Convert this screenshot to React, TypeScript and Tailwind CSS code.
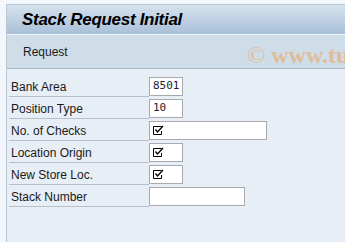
const rows = [
  { label: "Bank Area", value: "8501", width: "w-[34px]" },
  { label: "Position Type", value: "10", width: "w-[34px]" },
  { label: "No. of Checks", check: true, width: "w-[118px]" },
  { label: "Location Origin", check: true, width: "w-[34px]" },
  { label: "New Store Loc.", check: true, width: "w-[34px]" },
  { label: "Stack Number", value: "", width: "w-[96px]" },
];

function CheckGlyph() {
  return (
    <svg width="11" height="11" viewBox="0 0 11 11" className="block">
      <path d="M8.5 1.5 H0.5 V9.5 H8.5 V6" fill="none" stroke="#000" strokeWidth="1" />
      <path d="M2.5 4.5 L4.5 7 L10 1" fill="none" stroke="#000" strokeWidth="1.3" />
    </svg>
  );
}

export default function App() {
  return (
    <div className="h-[242px] w-[345px] overflow-hidden bg-[#f3f6fa] pt-[4px] font-['Liberation_Sans',Arial,sans-serif]">
      <div className="ml-[6px] flex h-[238px] flex-col border-l border-t border-[#b9c6d3] bg-[#e8eef6]">
        <div className="flex h-[30px] items-center border-b border-[#f2f6fa] bg-gradient-to-b from-[#d6e2ee] to-[#a9c0d8] pl-[15px]">
          <span className="text-[17px] font-bold italic tracking-[-0.3px] text-black">
            Stack Request Initial
          </span>
        </div>
        <div className="relative flex h-[34px] items-center border-b border-[#a7b8ca] bg-[#cfdde8] pl-[16px]">
          <span className="text-[12px] text-[#1a1a1a]">Request</span>
          <span className="absolute left-[240px] top-[2px] whitespace-nowrap font-['Liberation_Serif',serif] text-[24px] font-bold text-[#e7b07a] opacity-70">
            <span className="font-normal">©</span> www.tu
          </span>
        </div>
        <div className="flex flex-col gap-[2px] pl-[2px] pt-[8px]">
          {rows.map((r) => (
            <div key={r.label} className="flex items-start">
              <div className="flex h-[20px] w-[140px] items-center border-b border-[#b7bfc8] pl-[2px] text-[12px] text-[#1a1a1a]">
                {r.label}
              </div>
              <div
                className={`${r.width} flex h-[19px] items-center border border-[#a6aab0] bg-white pl-[3px] font-['DejaVu_Sans_Mono',monospace] text-[11px] text-[#202030]`}
              >
                {r.check ? <CheckGlyph /> : r.value}
              </div>
            </div>
          ))}
        </div>
      </div>
    </div>
  );
}
